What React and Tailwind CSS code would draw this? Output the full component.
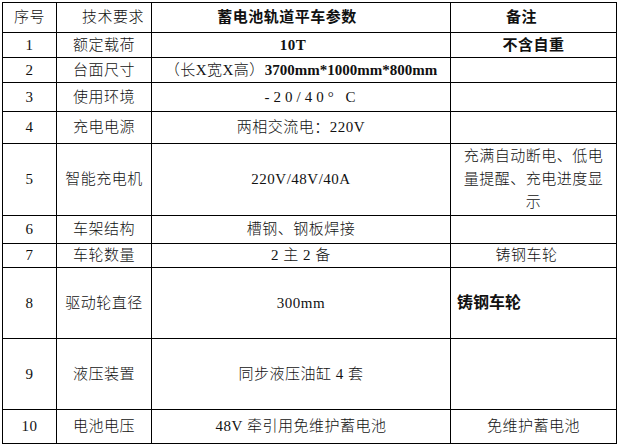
import React from "react";

const rowH = [29, 24, 24, 28, 31, 71, 27, 23, 70, 70, 33];

function C({ children, className = "" }) {
  return (
    <div className={"bg-white flex items-center justify-center text-center " + className}>
      {children}
    </div>
  );
}

export default function App() {
  return (
    <div className="w-[619px] h-[444px] bg-white pt-[2px] pl-[2px] font-['Liberation_Serif','Noto_Sans_CJK_SC',serif] text-[15px] font-light tracking-[0.5px] text-[#111] leading-none">
      <div
        className="grid w-[615px] bg-black p-px gap-px grid-cols-[53px_94px_298px_165px]"
        style={{ gridTemplateRows: rowH.map((h) => h + "px").join(" ") }}
      >
        <C>序号</C>
        <C className="pl-[18px]">技术要求</C>
        <C className="font-bold pr-[28px]">蓄电池轨道平车参数</C>
        <C className="font-bold pr-[24px]">备注</C>

        <C>1</C>
        <C>额定载荷</C>
        <C className="font-bold pr-[16px]">10T</C>
        <C className="font-bold">不含自重</C>

        <C>2</C>
        <C>台面尺寸</C>
        <C>
          <span>（长X宽X高）</span>
          <span className="font-bold tracking-normal">3700mm*1000mm*800mm</span>
        </C>
        <C></C>

        <C>3</C>
        <C>使用环境</C>
        <C className="pl-[22px] tracking-[4px]">-20/40° C</C>
        <C></C>

        <C>4</C>
        <C>充电电源</C>
        <C>两相交流电：220V</C>
        <C></C>

        <C>5</C>
        <C>智能充电机</C>
        <C>220V/48V/40A</C>
        <C className="px-[8px] leading-[23px]">充满自动断电、低电量提醒、充电进度显示</C>

        <C>6</C>
        <C>车架结构</C>
        <C>槽钢、钢板焊接</C>
        <C></C>

        <C>7</C>
        <C>车轮数量</C>
        <C>2 主 2 备</C>
        <C className="pr-[14px]">铸钢车轮</C>

        <C>8</C>
        <C>驱动轮直径</C>
        <C>300mm</C>
        <C className="!justify-start pl-[6px] font-bold text-[16px] tracking-normal">铸钢车轮</C>

        <C>9</C>
        <C>液压装置</C>
        <C>同步液压油缸 4 套</C>
        <C></C>

        <C>10</C>
        <C>电池电压</C>
        <C>48V 牵引用免维护蓄电池</C>
        <C>免维护蓄电池</C>
      </div>
    </div>
  );
}
